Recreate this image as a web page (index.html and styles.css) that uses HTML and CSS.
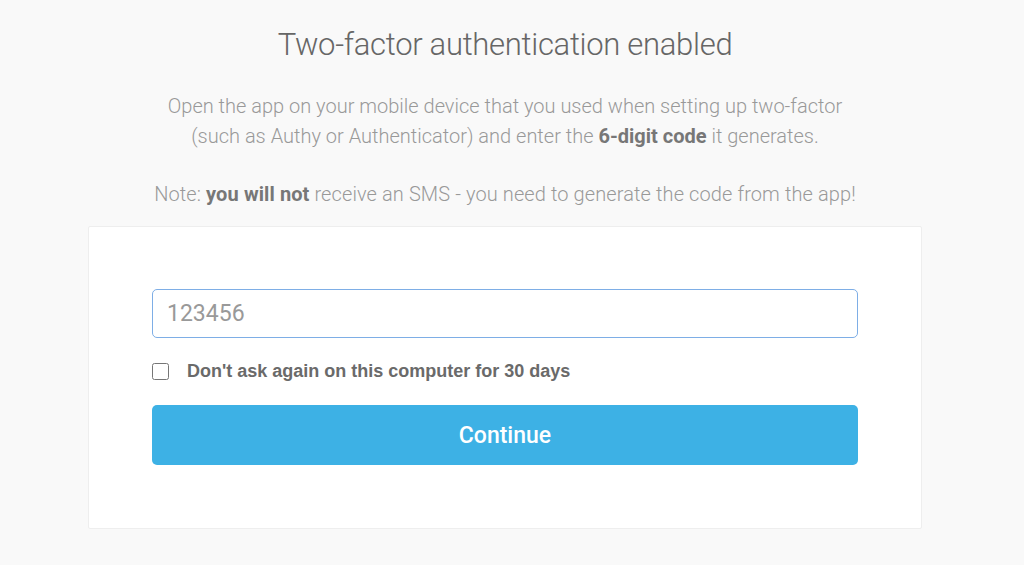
FILE: index.html
```html
<!doctype html>
<html lang="en">
<head>
    <meta charset="UTF-8">
    <title>Two-factor authentication</title>
    <link rel="stylesheet" href="styles.css">
</head>
<body>
    <div class="wrap">
        <h1 class="title">Two-factor authentication enabled</h1>
        <p class="intro">Open the app on your mobile device that you used when setting up two-factor<br>
            (such as Authy or Authenticator) and enter the <b>6-digit code</b> it generates.</p>
        <p class="note">Note: <b>you will not</b> receive an SMS - you need to generate the code from the app!</p>
        <div class="card">
            <input type="text" class="code" placeholder="123456">
            <label class="remember">
                <input type="checkbox">
                <span>Don't ask again on this computer for 30 days</span>
            </label>
            <button class="btn">Continue</button>
        </div>
    </div>
</body>
</html>
```

FILE: styles.css
```css
* {
    margin: 0;
    padding: 0;
    box-sizing: border-box;
}
body {
    background-color: #f9f9f9;
    font-family: Roboto, "Liberation Sans", sans-serif;
    color: #999;
}
.wrap {
    width: 834px;
    margin-left: 88px;
    padding-top: 26px;
    text-align: center;
}
.title {
    font-size: 31px;
    font-weight: 300;
    color: #666;
    line-height: 38px;
    letter-spacing: -0.3px;
}
.intro {
    margin-top: 27px;
    font-size: 20px;
    line-height: 30px;
    font-weight: 300;
    color: #999;
}
.intro b, .note b {
    color: #777;
    font-weight: 700;
}
.note {
    margin-top: 28px;
    font-size: 20px;
    line-height: 30px;
    font-weight: 300;
    letter-spacing: 0.1px;
}
.card {
    margin-top: 17px;
    background: #fff;
    border: 1px solid #eee;
    border-radius: 2px;
    padding: 62px 63px 63px;
    text-align: left;
}
.code {
    display: block;
    width: 100%;
    height: 49px;
    border: 1px solid #7eaee6;
    border-radius: 5px;
    padding: 0 14px;
    font-family: Roboto, "Liberation Sans", sans-serif;
    font-size: 23px;
    color: #555;
    outline: none;
}
.code::placeholder {
    color: #999;
}
.remember {
    display: flex;
    align-items: center;
    margin-top: 23px;
    font-family: "Liberation Sans", Arial, sans-serif;
    font-size: 18px;
    font-weight: 700;
    color: #6a6a6a;
}
.remember input {
    width: 17px;
    height: 17px;
    margin-right: 18px;
}
.btn {
    display: block;
    width: 100%;
    height: 60px;
    margin-top: 23px;
    border: 0;
    border-radius: 5px;
    background: #3db1e5;
    color: #fff;
    font-family: Roboto, "Liberation Sans", sans-serif;
    font-size: 23px;
    font-weight: 500;
}
```
